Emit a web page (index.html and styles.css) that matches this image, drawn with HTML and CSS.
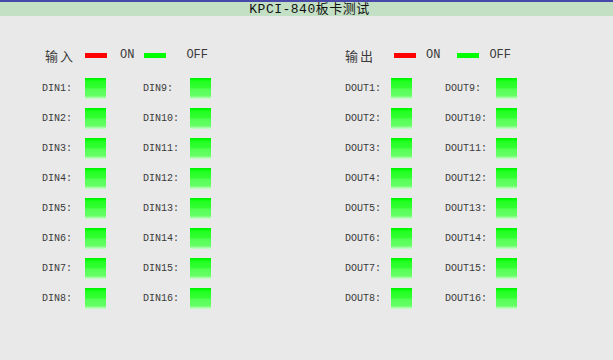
FILE: index.html
```html
<!DOCTYPE html>
<html lang="zh-CN">
<head>
    <meta charset="UTF-8">
    <title>KPCI-840板卡测试</title>
    <link rel="stylesheet" href="styles.css">
</head>
<body>

    <header class="titleBar">KPCI-840板卡测试</header>

    <main class="board">
        <!-- 输入 -->
        <section class="panel panelIn">
            <div class="legend">
                <span class="legendName">输入</span>
                <span class="bar barOn"></span>
                <span class="legendText">ON</span>
                <span class="bar barOff"></span>
                <span class="legendText">OFF</span>
            </div>
            <div class="grid" id="dinGrid"></div>
        </section>

        <!-- 输出 -->
        <section class="panel panelOut">
            <div class="legend">
                <span class="legendName">输出</span>
                <span class="bar barOn"></span>
                <span class="legendText">ON</span>
                <span class="bar barOff"></span>
                <span class="legendText">OFF</span>
            </div>
            <div class="grid" id="doutGrid"></div>
        </section>
    </main>

    <script>
        function fillGrid(id, prefix) {
            const grid = document.getElementById(id);
            for (let i = 1; i <= 8; i++) {
                [i, i + 8].forEach(n => {
                    const label = document.createElement('span');
                    label.className = 'chLabel';
                    label.textContent = prefix + n + ':';
                    const led = document.createElement('span');
                    led.className = 'led';
                    grid.appendChild(label);
                    grid.appendChild(led);
                });
            }
        }

        fillGrid('dinGrid', 'DIN');
        fillGrid('doutGrid', 'DOUT');
    </script>

</body>
</html>
```

FILE: styles.css
```css
body {
    margin: 0;
    padding: 0;
    background-color: #e9e9e9;
    color: #3a3a3a;
    font-family: 'Liberation Mono', 'Noto Sans CJK SC', monospace;
    height: 360px;
    overflow: hidden;
}

.titleBar {
    height: 14px;
    line-height: 15px;
    border-top: 2px solid #4848a8;
    background-color: #c3e0c5;
    color: #111;
    text-align: center;
    font-size: 13px;
    letter-spacing: 0.5px;
    padding-left: 6px;
}

.board {
    display: flex;
    padding-top: 29px;
}

.panelIn {
    margin-left: 42px;
    width: 303px;
}

.panelOut {
    width: 260px;
}

.legend {
    display: flex;
    align-items: center;
    height: 20px;
    font-size: 12px;
}

.legendName {
    font-size: 13px;
    letter-spacing: 2px;
    font-family: 'Noto Sans CJK SC', sans-serif;
}

.bar {
    width: 22px;
    height: 5px;
}

.barOn {
    background-color: #ff0000;
}

.barOff {
    background-color: #00ff00;
}

.panelIn .legendName { margin-left: 3px; }
.panelIn .barOn { margin-left: 10px; }
.panelIn .barOn + .legendText { margin-left: 13px; }
.panelIn .barOff { margin-left: 10px; }
.panelIn .barOff + .legendText { margin-left: 20px; }

.panelOut .legendName { margin-left: 0; }
.panelOut .barOn { margin-left: 19px; }
.panelOut .barOn + .legendText { margin-left: 10px; }
.panelOut .barOff { margin-left: 17px; }
.panelOut .barOff + .legendText { margin-left: 10px; }

.grid {
    display: grid;
    grid-auto-rows: 30px;
    align-items: center;
    margin-top: 8px;
    font-size: 10px;
}

.panelIn .grid {
    grid-template-columns: 43px 58px 47px 21px;
}

.panelOut .grid {
    grid-template-columns: 46px 54px 51px 21px;
}

.led {
    width: 21px;
    height: 21px;
    background: linear-gradient(to bottom,
        #00ee00 0, #00ff00 2px,
        #22ff22 3px, #33ff33 10px,
        #55ff55 11px, #66ff66 18px,
        #99ff99 19px, #c8ffc8 21px);
}
```
